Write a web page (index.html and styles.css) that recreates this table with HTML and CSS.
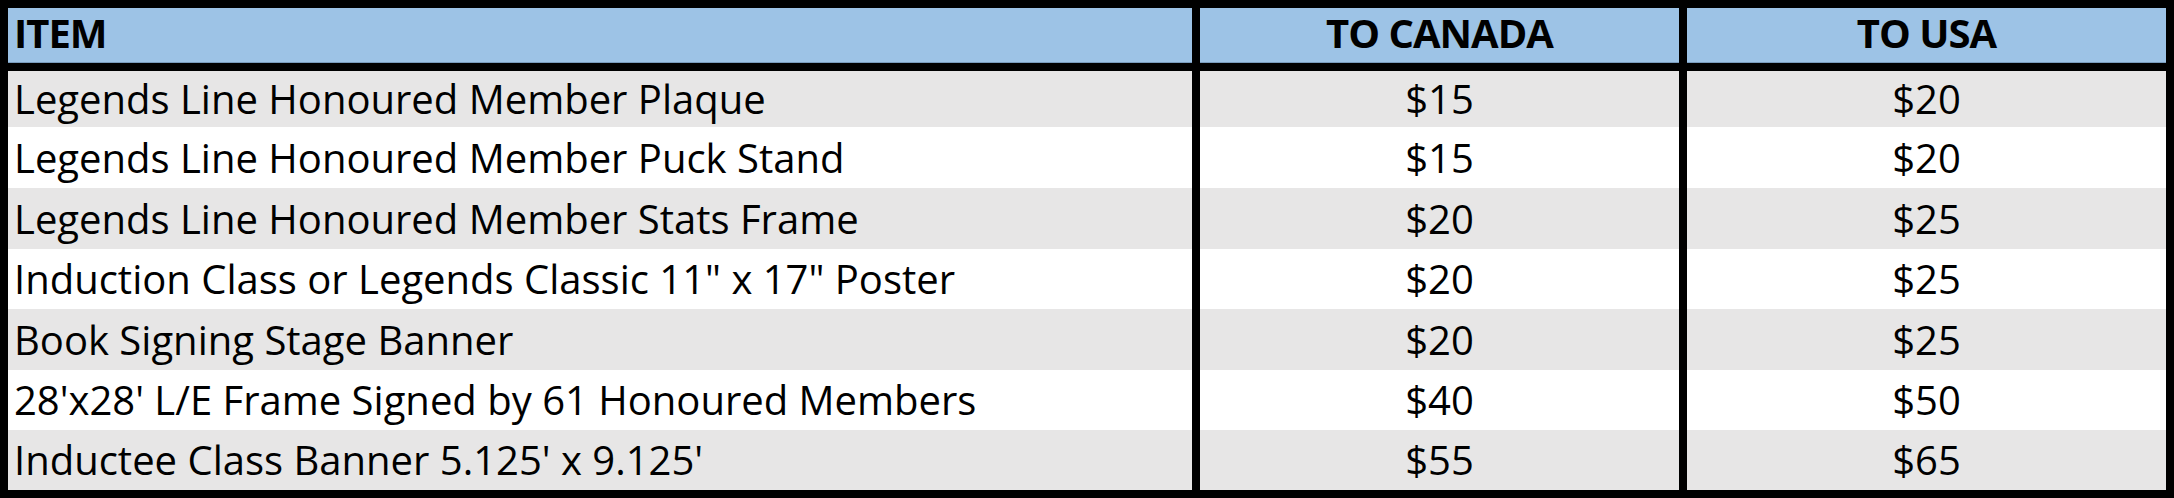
FILE: index.html
```html
<!DOCTYPE html>
<html>
<head>
<meta charset="utf-8">
<link rel="stylesheet" href="styles.css">
</head>
<body>
<div class="sheet">
  <div class="cell head item">ITEM</div>
  <div class="cell head num">TO CANADA</div>
  <div class="cell head num">TO USA</div>

  <div class="cell r1 gray item">Legends Line Honoured Member Plaque</div>
  <div class="cell r1 gray num">$15</div>
  <div class="cell r1 gray num">$20</div>

  <div class="cell item">Legends Line Honoured Member Puck Stand</div>
  <div class="cell num">$15</div>
  <div class="cell num">$20</div>

  <div class="cell gray item">Legends Line Honoured Member Stats Frame</div>
  <div class="cell gray num">$20</div>
  <div class="cell gray num">$25</div>

  <div class="cell item">Induction Class or Legends Classic 11" x 17" Poster</div>
  <div class="cell num">$20</div>
  <div class="cell num">$25</div>

  <div class="cell gray item">Book Signing Stage Banner</div>
  <div class="cell gray num">$20</div>
  <div class="cell gray num">$25</div>

  <div class="cell item">28'x28' L/E Frame Signed by 61 Honoured Members</div>
  <div class="cell num">$40</div>
  <div class="cell num">$50</div>

  <div class="cell gray item">Inductee Class Banner 5.125' x 9.125'</div>
  <div class="cell gray num">$55</div>
  <div class="cell gray num">$65</div>
</div>
</body>
</html>
```
FILE: styles.css
```css
html, body {
  margin: 0;
  padding: 0;
  background: #000;
}
.sheet {
  width: 2174px;
  height: 498px;
  box-sizing: border-box;
  border: 8px solid #000;
  background: #000;
  display: grid;
  grid-template-columns: 1184px 479px 479px;
  grid-template-rows: 55px 64px 61px 61px 60px 61px 60px 60px;
  column-gap: 8px;
  font-family: "Open Sans", sans-serif;
  font-variant-ligatures: none;
  color: #000;
}
.cell {
  display: flex;
  align-items: center;
  background: #fff;
  font-size: 40px;
  line-height: 1.2;
  white-space: nowrap;
  box-sizing: border-box;
}
.cell.gray {
  background: #e7e6e6;
}
.cell.head {
  background: #9dc3e6;
  font-weight: bold;
  border-bottom: 1px solid #7a9cbd;
  padding-bottom: 4px;
  letter-spacing: -1px;
}
.cell.item {
  padding-left: 6px;
}
.cell.num {
  justify-content: center;
}
.cell.r1 {
  border-top: 8px solid #000;
}
```
